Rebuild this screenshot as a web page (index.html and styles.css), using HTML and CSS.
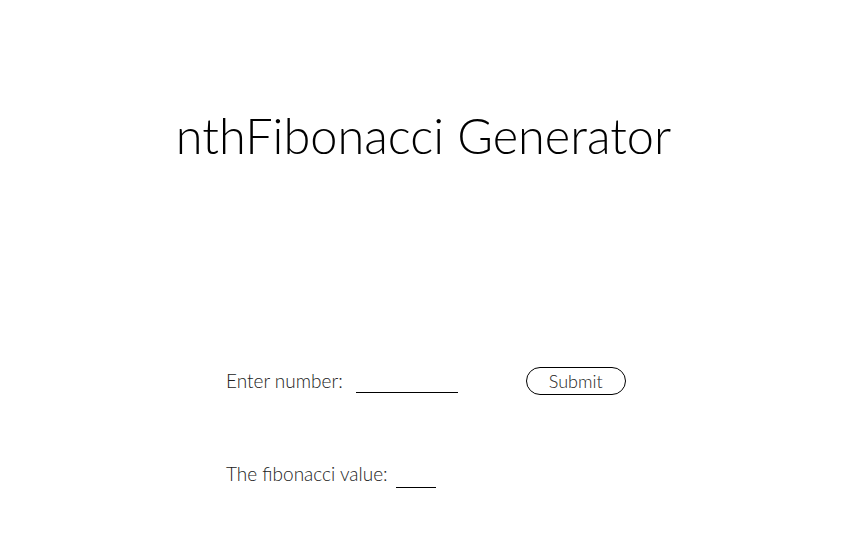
FILE: index.html
```html
<!DOCTYPE html>
<html>
<head>
<meta charset="utf-8">
<link rel="stylesheet" href="styles.css">
</head>
<body>
<h1 class="title">nthFibonacci Generator</h1>
<div class="form">
  <div class="row">
    <label class="label">Enter number:</label>
    <span class="input"></span>
    <button class="submit">Submit</button>
  </div>
  <div class="row result">
    <span class="label">The fibonacci value:</span>
    <span class="output"></span>
  </div>
</div>
</body>
</html>
```
FILE: styles.css
```css
html, body { margin: 0; padding: 0; background: #fff; }
body { font-family: Lato, "Liberation Sans", sans-serif; font-weight: 300; color: #000; width: 847px; height: 539px; overflow: hidden; }
.title { margin: 105px 0 0; text-align: center; font-weight: 300; font-size: 48.7px; line-height: 60px; }
.form { margin: 202px 0 0 226px; display: flex; flex-direction: column; gap: 65px; }
.row { display: flex; align-items: flex-end; height: 28px; }
.label { font-size: 19px; line-height: 24px; color: #222; margin-bottom: 2px; }
.input { width: 102px; border-bottom: 1px solid #000; margin-left: 13px; margin-bottom: 2px; }
.submit { margin-left: 68px; width: 100px; height: 28px; border: 1px solid #000; border-radius: 14px; background: #fff; font-family: inherit; font-weight: 300; font-size: 18px; color: #222; padding: 0; }
.output { width: 40px; border-bottom: 1px solid #000; margin-left: 8px; margin-bottom: 0; }
```
